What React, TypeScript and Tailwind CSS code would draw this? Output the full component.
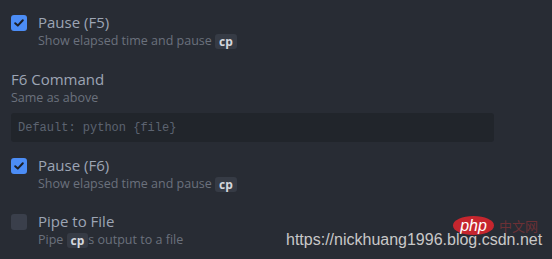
import React from 'react';

const Badge: React.FC<{ children: React.ReactNode }> = ({ children }) => (
  <span className="inline-block rounded-[3px] bg-[#363b45] px-[4px] text-[12px] font-bold leading-[15px] text-[#d4d7dd] align-middle">
    {children}
  </span>
);

const Checkbox: React.FC<{ checked: boolean }> = ({ checked }) =>
  checked ? (
    <div className="flex h-4 w-4 shrink-0 items-center justify-center rounded-[3px] bg-[#4c8df6]">
      <svg width="12" height="12" viewBox="0 0 12 12" fill="none">
        <path d="M2.2 6.2 L4.8 8.6 L9.8 3.2" stroke="#1c1f26" strokeWidth="2" strokeLinecap="round" strokeLinejoin="round" />
      </svg>
    </div>
  ) : (
    <div className="h-4 w-4 shrink-0 rounded-[3px] bg-[#3a3f4b]" />
  );

interface OptionProps {
  checked: boolean;
  title: string;
  children: React.ReactNode;
}

const Option: React.FC<OptionProps> = ({ checked, title, children }) => (
  <div className="flex items-start">
    <div className="pt-[3px]">
      <Checkbox checked={checked} />
    </div>
    <div className="ml-[11px]">
      <div className="text-[15px] leading-[20px] text-[#9da5b4]">{title}</div>
      <div className="text-[12.5px] leading-[18px] text-[#6b717d]">{children}</div>
    </div>
  </div>
);

const App: React.FC = () => {
  return (
    <div
      className="relative h-[259px] w-[552px] overflow-hidden bg-[#282c34] px-[11px] pt-[12px]"
      style={{ fontFamily: '"Open Sans", "Noto Sans", sans-serif' }}
    >
      <Option checked title="Pause (F5)">
        Show elapsed time and pause <Badge>cp</Badge>
      </Option>

      <div className="mt-[19px]">
        <div className="text-[15px] leading-[20px] text-[#9da5b4]">F6 Command</div>
        <div className="text-[12.5px] leading-[18px] text-[#6b717d]">Same as above</div>
        <div className="mt-[6px] flex h-[29px] w-[483px] items-center rounded-[3px] bg-[#21252b] px-[7px]">
          <span className="text-[12px] text-[#5c6370]" style={{ fontFamily: '"Liberation Mono", monospace' }}>
            Default: python {'{file}'}
          </span>
        </div>
      </div>

      <div className="mt-[13px]">
        <Option checked title="Pause (F6)">
          Show elapsed time and pause <Badge>cp</Badge>
        </Option>
      </div>

      <div className="mt-[18px]">
        <Option checked={false} title="Pipe to File">
          Pipe <Badge>cp</Badge>s output to a file
        </Option>
      </div>

      {/* watermark */}
      <div className="absolute left-[453px] top-[216px] flex items-center">
        <div className="flex h-[19px] w-[41px] items-center justify-center rounded-[50%] bg-[#c6262e]">
          <span className="text-[16px] italic leading-none text-white" style={{ fontFamily: '"Liberation Sans", sans-serif' }}>
            php
          </span>
        </div>
        <span className="ml-[5px] text-[13px] leading-none text-[#6b3035]" style={{ fontFamily: '"Noto Sans CJK SC", sans-serif' }}>
          中文网
        </span>
      </div>
      <div
        className="absolute left-[286px] top-[230px] text-[16px] leading-[19px] text-[#c8c8c8]"
        style={{ fontFamily: '"Liberation Sans", Arial, sans-serif' }}
      >
        https://nickhuang1996.blog.csdn.net
      </div>
    </div>
  );
};

export default App;
